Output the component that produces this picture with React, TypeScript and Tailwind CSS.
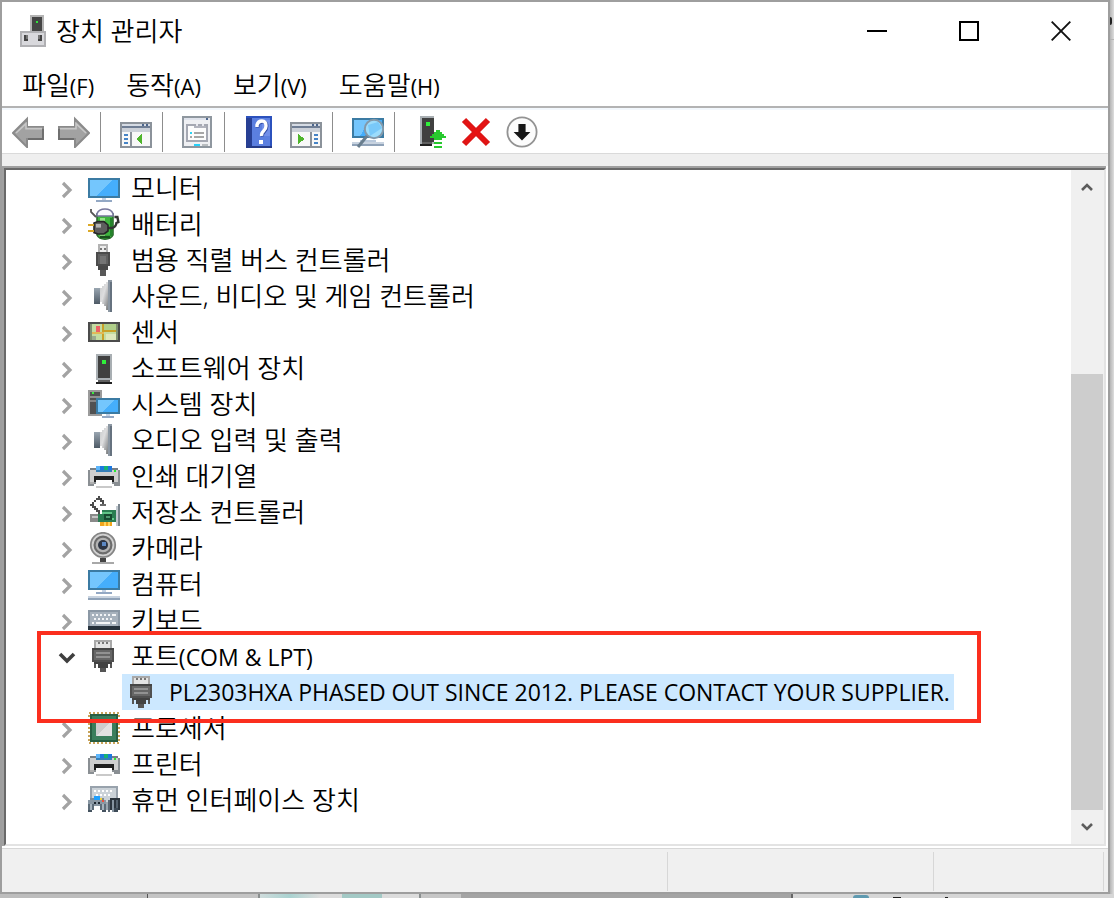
import type { ReactNode } from "react";

type Rect = [number, number, number, number, string];

function Pixels({ rects }: { rects: Rect[] }) {
  return (
    <>
      {rects.map(([x, y, w, h, fill], i) => (
        <rect key={i} x={x} y={y} width={w} height={h} fill={fill} />
      ))}
    </>
  );
}

function Icon({ rects, children, smooth }: { rects?: Rect[]; children?: ReactNode; smooth?: boolean }) {
  return (
    <svg
      viewBox="0 0 16 16"
      aria-hidden="true"
      className="size-8 shrink-0"
      shapeRendering={smooth ? "auto" : "crispEdges"}
    >
      {rects && <Pixels rects={rects} />}
      {children}
    </svg>
  );
}

/* ---------- device icons ---------- */

const MonitorIcon = () => (
  <Icon
    rects={[
      [0, 3, 16, 10, "#3b7ba3"],
      [1, 4, 14, 8, "#45aefc"],
      [7, 13, 2, 1, "#c3d2e6"],
      [4, 14, 8, 1, "#93a8c4"],
    ]}
  >
    <path d="M1 4h11L4 12H1z" fill="#74c6fd" />
  </Icon>
);

const ComputerIcon = () => (
  <Icon
    rects={[
      [0, 1, 16, 10, "#3b7ba3"],
      [1, 2, 14, 8, "#45aefc"],
      [7, 11, 2, 1, "#c3d2e6"],
      [4, 12, 8, 1, "#93a8c4"],
      [0, 14, 16, 1, "#c8d3e0"],
      [0, 15, 16, 1, "#8fa2b8"],
    ]}
  >
    <path d="M1 2h11L4 10H1z" fill="#74c6fd" />
  </Icon>
);

const BatteryIcon = () => (
  <Icon smooth>
    <path d="M4.500 3v10.500Q5.500 15.600 8.500 15.600T12.500 13.500V3z" fill="#3fb53f" stroke="#2a6a2c" strokeWidth="0.8" />
    <path d="M6 5h2.500v10H7q-1 0-1-1z" fill="#93e487" />
    <path d="M11 5h1.200v9H11z" fill="#23842a" />
    <path d="M4.500 4V2.800Q5.500 0.500 8.500 0.500T12.500 2.800V4z" fill="#fafaff" stroke="#77779c" strokeWidth="0.8" />
    <path d="M6 14.500h5" stroke="#184e1c" strokeWidth="1.2" />
    <path d="M1.500 0.500v1.500l2.500 2.500" fill="none" stroke="#555" strokeWidth="0.9" />
    <path d="M10 10h2q2-0.500 2.200-2.500l1-0.500-0.500-2.500h-1.500" fill="none" stroke="#333" strokeWidth="1.2" />
    <path d="M3 7.500l2-0.700h3l2 1.700v3L8 13H5l-2-0.700z" fill="#5e5e5e" stroke="#262626" strokeWidth="0.8" />
    <path d="M4 8h2.500v1.800H4z" fill="#b5b5b5" />
    <path d="M0 8.500h3M0 11.500h3" stroke="#dba927" />
  </Icon>
);

const UsbIcon = () => (
  <Icon
    rects={[
      [5, 0, 5, 5, "#b3b3b3"],
      [6, 1, 3, 3, "#ececec"],
      [6, 2, 1, 1, "#777"],
      [8, 2, 1, 1, "#777"],
      [4, 4, 7, 7, "#4b4b4b"],
      [5, 5, 5, 5, "#606060"],
      [6, 6, 3, 4, "#747474"],
      [5, 11, 5, 2, "#484848"],
      [6, 13, 3, 3, "#585858"],
    ]}
  />
);

const SpeakerIcon = () => (
  <Icon>
    <defs>
      <linearGradient id="cone" x1="0" y1="0" x2="1" y2="1">
        <stop offset="0" stopColor="#c9cbcc" />
        <stop offset="0.45" stopColor="#dededf" />
        <stop offset="1" stopColor="#7b7e80" />
      </linearGradient>
      <linearGradient id="magnet" x1="0" y1="0" x2="0" y2="1">
        <stop offset="0" stopColor="#9aa6b1" />
        <stop offset="1" stopColor="#4e5a66" />
      </linearGradient>
    </defs>
    <path d="M3 4h3v8H3z" fill="url(#magnet)" />
    <path d="M6 4h1V3h1V2h1V1h1v14H9v-2H8v-1H7v-1H6z" fill="url(#cone)" />
    <path d="M10 0h2v16h-2z" fill="#8d98a3" />
    <path d="M11 1h1v15h-1z" fill="#66727f" />
  </Icon>
);

const SensorIcon = () => (
  <Icon
    rects={[
      [0, 3, 16, 10, "#4b4b4b"],
      [1, 4, 14, 8, "#c4dca0"],
      [1, 4, 1, 8, "#7f8f6f"],
      [14, 4, 1, 8, "#7f8f6f"],
      [8, 4, 6, 3, "#b0cf89"],
      [9, 9, 5, 3, "#dfe8bd"],
      [7, 4, 1, 8, "#c9a128"],
      [2, 8, 6, 1, "#e1b957"],
      [8, 7, 6, 1, "#c9a128"],
      [4, 5, 2, 3, "#ed6064"],
      [2, 10, 2, 2, "#9aab8e"],
    ]}
  />
);

const TowerIcon = () => (
  <Icon
    rects={[
      [4, 1, 8, 13, "#a9afb3"],
      [5, 2, 6, 11, "#404040"],
      [7, 4, 2, 2, "#2ff03a"],
      [5, 14, 6, 1, "#606060"],
      [4, 15, 8, 1, "#202020"],
    ]}
  />
);

const SystemIcon = () => (
  <Icon
    rects={[
      [0, 1, 7, 13, "#9b9b9b"],
      [1, 2, 5, 11, "#515151"],
      [2, 2, 1, 1, "#37ef3d"],
      [1, 4, 5, 1, "#909090"],
      [1, 6, 3, 1, "#868686"],
      [4, 5, 12, 8, "#3b7ba3"],
      [5, 6, 10, 6, "#45aefc"],
      [9, 13, 2, 1, "#c3d2e6"],
      [7, 14, 6, 1, "#93a8c4"],
    ]}
  >
    <path d="M5 6h8l-6 6H5z" fill="#74c6fd" />
  </Icon>
);

const PrinterIcon = () => (
  <Icon
    rects={[
      [4, 3, 3, 3, "#5cb5fb"],
      [6, 3, 2, 3, "#1d78e0"],
      [8, 3, 2, 3, "#17b274"],
      [10, 3, 2, 3, "#1d78e0"],
      [1, 4, 3, 1, "#777f85"],
      [12, 4, 3, 1, "#777f85"],
      [0, 5, 16, 8, "#8a8f93"],
      [1, 5, 14, 6, "#cfcfcf"],
      [4, 5, 8, 1, "#357fb8"],
      [13, 5, 1, 1, "#25ed30"],
      [3, 8, 10, 3, "#1f1f1f"],
      [1, 11, 2, 1, "#b0b0b0"],
      [4, 10, 8, 4, "#fff"],
      [3, 12, 1, 1, "#fff"],
      [12, 12, 1, 1, "#fff"],
      [4, 13, 8, 1, "#c9c9c9"],
    ]}
  />
);

const StorageIcon = () => (
  <Icon
    rects={[
      [1, 9, 5, 4, "#8a8a8a"],
      [2, 10, 3, 1, "#c4c4c4"],
      [7, 7, 7, 6, "#2b7d52"],
      [5, 9, 9, 4, "#2b7d52"],
      [7, 8, 5, 1, "#5fc487"],
      [8, 9, 4, 3, "#174b30"],
      [9, 10, 2, 1, "#4f9a70"],
      [12, 11, 1, 1, "#65cd8c"],
      [6, 13, 6, 2, "#f1a51d"],
      [8, 13, 1, 2, "#ffd45e"],
      [10, 13, 1, 2, "#ffd45e"],
      [14, 5, 1, 10, "#c3cad0"],
      [15, 4, 1, 11, "#7b868f"],
      /* outlined link arrow */
      [5, 0, 1, 1, "#4b4b4b"],
      [4, 1, 3, 1, "#4b4b4b"],
      [3, 2, 1, 1, "#4b4b4b"],
      [6, 2, 2, 1, "#4b4b4b"],
      [2, 3, 1, 1, "#4b4b4b"],
      [7, 3, 1, 1, "#4b4b4b"],
      [1, 4, 2, 1, "#4b4b4b"],
      [6, 4, 3, 1, "#6a6a6a"],
      [2, 5, 2, 1, "#4b4b4b"],
      [3, 6, 2, 1, "#4b4b4b"],
      [4, 7, 2, 1, "#4b4b4b"],
      [5, 8, 1, 1, "#4b4b4b"],
    ]}
  />
);

const CameraIcon = () => (
  <Icon smooth>
    <circle cx="7.500" cy="6.500" r="6.100" fill="#d2d2d2" stroke="#858585" strokeWidth="0.9" />
    <circle cx="7.500" cy="6.500" r="4.200" fill="#b3b3b3" stroke="#6c6c6c" strokeWidth="1.100" />
    <circle cx="7.500" cy="6.500" r="2.500" fill="#2c3443" />
    <rect x="7" y="5" width="2" height="2" fill="#5c88c4" />
    <rect x="6" y="13" width="3" height="2" fill="#444" />
    <rect x="2" y="15" width="11" height="1" fill="#a8a8a8" />
  </Icon>
);

const KeyboardIcon = () => (
  <Icon
    rects={[
      [0, 3, 16, 8, "#8b98a5"],
      [1, 4, 14, 7, "#a7b2bd"],
      [2, 5, 1, 1, "#f3f5f7"],
      [4, 5, 1, 1, "#f3f5f7"],
      [6, 5, 1, 1, "#f3f5f7"],
      [8, 5, 1, 1, "#f3f5f7"],
      [10, 5, 1, 1, "#f3f5f7"],
      [12, 5, 2, 1, "#f3f5f7"],
      [3, 7, 1, 1, "#f3f5f7"],
      [5, 7, 1, 1, "#f3f5f7"],
      [7, 7, 1, 1, "#f3f5f7"],
      [9, 7, 1, 1, "#f3f5f7"],
      [11, 7, 1, 1, "#f3f5f7"],
      [2, 9, 1, 1, "#f3f5f7"],
      [4, 9, 7, 1, "#f3f5f7"],
      [12, 9, 2, 1, "#f3f5f7"],
      [0, 11, 16, 2, "#26323d"],
    ]}
  />
);

const PortIcon = () => (
  <Icon
    rects={[
      [3, 0, 9, 5, "#a9a9a9"],
      [4, 1, 7, 4, "#e3e3e3"],
      [5, 1, 1, 1, "#777"],
      [7, 1, 1, 1, "#777"],
      [9, 1, 1, 1, "#777"],
      [2, 4, 11, 1, "#454545"],
      [2, 5, 11, 6, "#505050"],
      [3, 5, 9, 5, "#666"],
      [4, 6, 7, 1, "#929292"],
      [4, 8, 7, 1, "#929292"],
      [3, 11, 9, 1, "#424242"],
      [3, 12, 1, 2, "#565656"],
      [5, 12, 5, 2, "#424242"],
      [11, 12, 1, 2, "#565656"],
      [6, 14, 3, 2, "#555"],
    ]}
  />
);

const ProcessorIcon = () => (
  <Icon>
    <rect x="0.500" y="0.500" width="15" height="15" fill="none" stroke="#c9a45a" strokeWidth="1" strokeDasharray="1 1" />
    <Pixels
      rects={[
        [1, 1, 14, 14, "#285e42"],
        [2, 2, 12, 12, "#3a7e5c"],
        [4, 4, 8, 8, "#cdcdcd"],
      ]}
    />
    <path d="M12 4L4 12h8z" fill="#e2e2e2" />
  </Icon>
);

const HidIcon = () => (
  <Icon
    rects={[
      [1, 1, 14, 8, "#98a2ac"],
      [2, 2, 12, 7, "#cbd2d8"],
      [3, 3, 1, 1, "#fff"],
      [5, 3, 1, 1, "#fff"],
      [7, 3, 1, 1, "#fff"],
      [9, 3, 1, 1, "#fff"],
      [11, 3, 1, 1, "#fff"],
      [4, 5, 1, 1, "#fff"],
      [6, 5, 1, 1, "#fff"],
      [8, 5, 1, 1, "#fff"],
      [10, 5, 1, 1, "#fff"],
      [1, 7, 7, 2, "#7d8b98"],
      [0, 8, 9, 3, "#8997a3"],
      [0, 10, 3, 3, "#5d6c79"],
      [0, 13, 2, 1, "#44525f"],
      [6, 10, 3, 3, "#5d6c79"],
      [7, 13, 2, 1, "#44525f"],
      [1, 10, 1, 3, "#a5b2bd"],
      [7, 10, 1, 3, "#a5b2bd"],
      [3, 6, 3, 2, "#1f9ffc"],
      [6, 7, 1, 1, "#f2d13c"],
      [7, 8, 1, 1, "#ef4e3b"],
      [3, 9, 1, 1, "#1d2730"],
      [5, 9, 1, 1, "#1d2730"],
      [11, 7, 5, 6, "#2c353e"],
      [10, 8, 1, 6, "#5a6773"],
      [12, 8, 1, 6, "#8794a0"],
      [14, 8, 1, 5, "#56636f"],
      [13, 12, 2, 2, "#3d4a56"],
      [9, 9, 1, 4, "#9aa6b0"],
    ]}
  />
);

/* ---------- toolbar icons ---------- */

const ArrowShape = () => (
  <>
    <path d="M0.500 8.500L7.500 1.500V5.500H15.500V11.500H7.500V15.500z" fill="#a2a2a2" stroke="#8a8a8a" />
    <path d="M2 8.500L7 3.800V6.300H15" fill="none" stroke="#c7c7c7" strokeWidth="0.800" />
    <path d="M8 11.500h7.500v-5" fill="none" stroke="#6d6d6d" strokeWidth="0.900" />
  </>
);

const BackIcon = () => (
  <Icon smooth>
    <ArrowShape />
  </Icon>
);

const ForwardIcon = () => (
  <Icon smooth>
    <g transform="matrix(-1 0 0 1 16 0)">
      <ArrowShape />
    </g>
  </Icon>
);

const frame: Rect[] = [
  [0, 3, 16, 13, "#8b929a"],
  [1, 4, 14, 1, "#d5dbe4"],
  [11, 4, 1, 1, "#4c658c"],
  [13, 4, 1, 1, "#4c658c"],
  [1, 5, 14, 1, "#6e7d94"],
  [1, 6, 14, 2, "#cbd0d8"],
  [1, 8, 14, 7, "#f8f8f8"],
];

const TreePaneIcon = () => (
  <Icon
    rects={[
      ...frame,
      [5, 8, 1, 7, "#8b929a"],
      [2, 9, 2, 1, "#4684c6"],
      [2, 11, 2, 1, "#4684c6"],
      [2, 13, 2, 1, "#4684c6"],
    ]}
  >
    <path d="M8 11.500L11 9v5z" fill="#4fb52c" />
  </Icon>
);

const ActionPaneIcon = () => (
  <Icon
    rects={[
      ...frame,
      [10, 8, 1, 7, "#8b929a"],
      [12, 9, 2, 1, "#4684c6"],
      [12, 11, 2, 1, "#4684c6"],
      [12, 13, 2, 1, "#4684c6"],
    ]}
  >
    <path d="M4 9l3.500 2.500L4 14z" fill="#4fb52c" />
  </Icon>
);

const PropertiesIcon = () => (
  <Icon
    rects={[
      [0, 0, 15, 16, "#8f979f"],
      [1, 1, 13, 1, "#dfe3ec"],
      [12, 1, 1, 1, "#4c658c"],
      [1, 2, 13, 13, "#eff0f3"],
      [2, 4, 11, 9, "#a5a8b2"],
      [3, 5, 9, 7, "#fcfcfc"],
      [6, 5, 6, 1, "#b2b4be"],
      [7, 4, 1, 1, "#e8e8ee"],
      [10, 4, 1, 1, "#e8e8ee"],
      [4, 8, 1, 1, "#2bd3f4"],
      [6, 8, 5, 1, "#a6a6a6"],
      [4, 10, 1, 1, "#a6a6a6"],
      [6, 10, 5, 1, "#a6a6a6"],
      [6, 14, 3, 1, "#27cff8"],
      [10, 14, 3, 1, "#b9bdc0"],
    ]}
  />
);

const HelpIcon = () => (
  <Icon
    rects={[
      [1, 0, 13, 16, "#2b51bd"],
      [1, 1, 3, 14, "#273f94"],
      [4, 1, 9, 14, "#5b7fe0"],
      [9, 2, 4, 8, "#718fe9"],
      [1, 15, 13, 1, "#263c88"],
    ]}
  >
    <g shapeRendering="auto">
      <path d="M6.500 5.500V4.500Q7 2.500 9 2.500T11 5Q11 6.500 9.800 7.500T8.800 10" transform="translate(0.300 0.300)" fill="none" stroke="#2e479f" strokeWidth="1.800" />
      <path d="M6.500 5.500V4.500Q7 2.500 9 2.500T11 5Q11 6.500 9.800 7.500T8.800 10" fill="none" stroke="#fff" strokeWidth="1.700" />
      <rect x="7.500" y="12" width="2" height="2" fill="#fff" />
    </g>
  </Icon>
);

const ScanIcon = () => (
  <Icon
    rects={[
      [0, 1, 16, 10, "#3b7ba3"],
      [1, 2, 14, 8, "#45aefc"],
      [4, 12, 8, 1, "#b9c9dc"],
      [0, 13, 16, 1, "#c8d3e0"],
      [0, 14, 16, 1, "#8fa2b8"],
    ]}
  >
    <path d="M1 2h8L4 10H1z" fill="#74c6fd" />
    <g shapeRendering="auto">
      <circle cx="11" cy="6.500" r="4.600" fill="#9cdcfb" stroke="#8399aa" />
      <path d="M8 4.500L13 3l2 3-6 4z" fill="#79c9f9" />
      <path d="M7.500 10L3 15.500" stroke="#697e8e" strokeWidth="1.500" />
    </g>
  </Icon>
);

const UpdateDriverIcon = () => (
  <Icon
    rects={[
      [3, 0, 7, 14, "#a9afb3"],
      [4, 1, 6, 12, "#404040"],
      [6, 3, 2, 2, "#2ff03a"],
      [4, 13, 5, 1, "#606060"],
      [3, 14, 6, 1, "#202020"],
      [10, 13, 4, 1, "#28c92e"],
      [10, 15, 4, 1, "#28c92e"],
    ]}
  >
    <path d="M12 7h1v1h1v1h1v1h1v1h-2v1h-4v-1H8v-1h1V9h1V8h1V7z" fill="#28c92e" />
  </Icon>
);

const UninstallIcon = () => (
  <Icon smooth>
    <path d="M2 2l12 12M14 2L2 14" stroke="#dd1515" strokeWidth="3" />
    <path d="M3 3l10 10M13 3L3 13" stroke="#e81313" strokeWidth="1.200" />
  </Icon>
);

const DisableIcon = () => (
  <Icon smooth>
    <circle cx="8" cy="8" r="7.300" fill="#fcfcfc" stroke="#939393" strokeWidth="0.900" />
    <path d="M6.200 4h3.600v4H12.200L8 12.200 3.800 8H6.200z" fill="#171717" />
  </Icon>
);

/* ---------- tree ---------- */

function ExpandArrow({ open }: { open?: boolean }) {
  return open ? (
    <svg viewBox="0 0 18 12" className="h-3 w-[18px]" aria-hidden="true">
      <path d="M2 2l7 7 7-7" fill="none" stroke="#3f3f3f" strokeWidth="3.600" />
    </svg>
  ) : (
    <svg viewBox="0 0 12 18" className="h-[18px] w-3" aria-hidden="true">
      <path d="M2 2l7 7-7 7" fill="none" stroke="#a3a3a3" strokeWidth="3.200" />
    </svg>
  );
}

function Row({ label, icon, open }: { label: ReactNode; icon: ReactNode; open?: boolean }) {
  return (
    <div className="flex h-9 items-center pl-[50px]">
      <button
        type="button"
        aria-label={open ? "접기" : "펼치기"}
        className="mr-[11px] flex w-[21px] shrink-0 items-center justify-center pt-1"
      >
        <ExpandArrow open={open} />
      </button>
      {icon}
      <span className="ml-[11px] whitespace-nowrap">{label}</span>
    </div>
  );
}

const before: [string, () => ReactNode][] = [
  ["모니터", MonitorIcon],
  ["배터리", BatteryIcon],
  ["범용 직렬 버스 컨트롤러", UsbIcon],
  ["사운드, 비디오 및 게임 컨트롤러", SpeakerIcon],
  ["센서", SensorIcon],
  ["소프트웨어 장치", TowerIcon],
  ["시스템 장치", SystemIcon],
  ["오디오 입력 및 출력", SpeakerIcon],
  ["인쇄 대기열", PrinterIcon],
  ["저장소 컨트롤러", StorageIcon],
  ["카메라", CameraIcon],
  ["컴퓨터", ComputerIcon],
  ["키보드", KeyboardIcon],
];

const after: [string, () => ReactNode][] = [
  ["프로세서", ProcessorIcon],
  ["프린터", PrinterIcon],
  ["휴먼 인터페이스 장치", HidIcon],
];

function Items({ items }: { items: [string, () => ReactNode][] }) {
  return (
    <>
      {items.map(([label, Glyph]) => (
        <li key={label} role="treeitem" aria-expanded={false}>
          <Row label={label} icon={<Glyph />} />
        </li>
      ))}
    </>
  );
}

function DeviceTree() {
  return (
    <ul role="tree" aria-label="장치" className="min-w-0 flex-1">
      <Items items={before} />
      <li role="treeitem" aria-expanded={true} className="relative">
        <Row
          open
          icon={<PortIcon />}
          label={
            <>
              포트<span className="font-['Open_Sans','Noto_Sans',sans-serif] text-[23px] font-normal">(COM &amp; LPT)</span>
            </>
          }
        />
        <ul role="group" className="flex">
          <li
            role="treeitem"
            aria-selected={true}
            className="ml-[116px] flex h-9 items-center bg-[#cce8ff] pr-1 pl-1 font-['Open_Sans','Noto_Sans',sans-serif] text-[23px] font-normal whitespace-nowrap"
          >
            <PortIcon />
            <span className="ml-[11px]">PL2303HXA PHASED OUT SINCE 2012. PLEASE CONTACT YOUR SUPPLIER.</span>
          </li>
        </ul>
        <div className="pointer-events-none absolute -top-[7px] -bottom-[13px] left-[31px] z-10 w-[944px] border-4 border-[#fb2e1e]" />
      </li>
      <Items items={after} />
    </ul>
  );
}

function ScrollArrow({ down }: { down?: boolean }) {
  return (
    <button
      type="button"
      aria-label={down ? "아래로 스크롤" : "위로 스크롤"}
      className="flex h-[34px] shrink-0 items-center justify-center"
    >
      <svg viewBox="0 0 12 10" className="h-[10px] w-3" aria-hidden="true">
        <path d={down ? "M1 2l5 5 5-5" : "M1 8l5-5 5 5"} fill="none" stroke="#5c5c5c" strokeWidth="2.600" />
      </svg>
    </button>
  );
}

/* ---------- window chrome ---------- */

const toolGroups: [string, () => ReactNode][][] = [
  [
    ["뒤로", BackIcon],
    ["앞으로", ForwardIcon],
  ],
  [["콘솔 트리 표시/숨기기", TreePaneIcon]],
  [["속성", PropertiesIcon]],
  [
    ["도움말", HelpIcon],
    ["작업 창 표시/숨기기", ActionPaneIcon],
  ],
  [["하드웨어 변경 사항 검색", ScanIcon]],
  [
    ["드라이버 업데이트", UpdateDriverIcon],
    ["디바이스 제거", UninstallIcon],
    ["디바이스 사용 안 함", DisableIcon],
  ],
];

const menus: [string, string][] = [
  ["파일", "(F)"],
  ["동작", "(A)"],
  ["보기", "(V)"],
  ["도움말", "(H)"],
];

function TitleBar() {
  return (
    <header className="flex h-[58px] items-center pr-px pl-[18px]">
      <svg viewBox="0 0 14 16" className="h-8 w-7 shrink-0" aria-hidden="true" shapeRendering="crispEdges">
        <Pixels
          rects={[
            [5, 0, 7, 8, "#b4b4b4"],
            [6, 1, 5, 7, "#454545"],
            [8, 3, 1, 1, "#2fe53a"],
            [0, 8, 13, 8, "#b0b0b3"],
            [1, 9, 11, 6, "#d8d8dc"],
            [2, 10, 2, 3, "#444"],
            [9, 10, 2, 3, "#444"],
            [3, 10, 1, 2, "#777"],
            [9, 10, 1, 2, "#777"],
          ]}
        />
      </svg>
      <h1 className="ml-2 flex-1 whitespace-nowrap">장치 관리자</h1>
      <button type="button" aria-label="최소화" className="flex h-full w-[92px] items-center justify-center">
        <span className="h-[2px] w-5 bg-black" />
      </button>
      <button type="button" aria-label="최대화" className="flex h-full w-[92px] items-center justify-center">
        <span className="size-5 border-2 border-black" />
      </button>
      <button type="button" aria-label="닫기" className="flex h-full w-[92px] items-center justify-center">
        <svg viewBox="0 0 20 20" className="size-5" aria-hidden="true">
          <path d="M0.700 0.700l18.600 18.600M19.300 0.700L0.700 19.300" stroke="#111" strokeWidth="1.900" />
        </svg>
      </button>
    </header>
  );
}

function Toolbar() {
  return (
    <div role="toolbar" className="flex h-[46px] shrink-0 border-t-2 border-b border-t-[#f3f8fd] border-b-[#dadada] pl-[3px]">
      {toolGroups.map((group, g) => (
        <div key={g} className="flex">
          {g > 0 && <div className="mt-[2px] mr-3 ml-[3px] h-10 w-px bg-[#8d8d8d]" />}
          {group.map(([name, Glyph]) => (
            <button key={name} type="button" aria-label={name} className="flex w-[46px] items-start justify-center pt-[6px]">
              <Glyph />
            </button>
          ))}
        </div>
      ))}
    </div>
  );
}

export default function App() {
  return (
    <div className="flex min-h-screen flex-col bg-[#c6c6c6] font-['Noto_Sans','Noto_Sans_CJK_KR',sans-serif] text-[26px] leading-9 font-[350] text-black">
      <div className="flex flex-1">
        <div className="flex min-w-0 flex-1 flex-col border-2 border-[#9e9e9e] bg-white">
          <TitleBar />
          <nav className="flex h-[46px] items-center gap-8 pt-1 pl-5">
            {menus.map(([name, key]) => (
              <button key={name} type="button" className="flex items-baseline whitespace-nowrap">
                {name}
                <span className="font-['Open_Sans','Noto_Sans',sans-serif] text-[22px] font-normal">{key}</span>
              </button>
            ))}
          </nav>
          <div className="h-[2px] bg-[#b3b3b3]" />
          <Toolbar />
          <div className="h-3 bg-[#efefef]" />
          <main className="mr-[2px] flex flex-1 border-t-2 border-l-2 border-[#a0a0a0]">
            <div className="flex min-w-0 flex-1 border-2 border-t-[#696969] border-r-[#e3e3e3] border-b-[#e3e3e3] border-l-[#696969]">
              <DeviceTree />
              <div className="flex w-[33px] shrink-0 flex-col bg-[#f0f0f0] pr-px">
                <ScrollArrow />
                <div className="flex-[170]" />
                <div className="flex-[436] bg-[#cdcdcd]" />
                <ScrollArrow down />
              </div>
            </div>
          </main>
          <footer className="mt-[2px] flex h-11 border-t border-[#d7d7d7] bg-[#f0f0f0] pt-[3px] pr-1 pb-px">
            <div className="flex-1 border-r border-[#d7d7d7]" />
            <div className="w-[266px] border-r border-[#d7d7d7]" />
            <div className="w-[170px] border-r border-[#d7d7d7]" />
          </footer>
        </div>
        <div className="w-1 bg-gradient-to-r from-[#b5b5b5] to-[#dedede] pt-[17px]">
          <div className="h-2 w-[2px] rounded-r-full bg-[#222]" />
          <div className="mt-[14px] h-px bg-[#b5b5b5]" />
        </div>
      </div>
      <div className="flex h-1">
        <div className="w-[148px] border-r border-[#555] bg-[#bdbdbd]" />
        <div className="w-[110px] bg-[#c4c4c4]" />
        <div className="flex w-[163px] border-x-2 border-[#8a8f8f] bg-[#dcdcdc]">
          <div className="w-[60px] bg-gradient-to-r from-[#cfdcdc] via-[#a9d2d0] to-[#dcdcdc]" />
          <div className="ml-[22px] w-10 bg-[#a3c9c5]" />
        </div>
        <div className="w-10 bg-[#c6c6c6]" />
        <div className="w-[332px] border-r-2 border-[#666] bg-[#a4a4a4]" />
        <div className="flex flex-1 items-end bg-[#d6d6d6] pl-[60px]">
          <div className="h-[3px] w-4 rounded-t-full bg-[#5f9ab0]" />
          <div className="ml-6 h-px w-2 bg-[#222]" />
          <div className="ml-11 h-px w-[3px] bg-[#222]" />
        </div>
      </div>
    </div>
  );
}
